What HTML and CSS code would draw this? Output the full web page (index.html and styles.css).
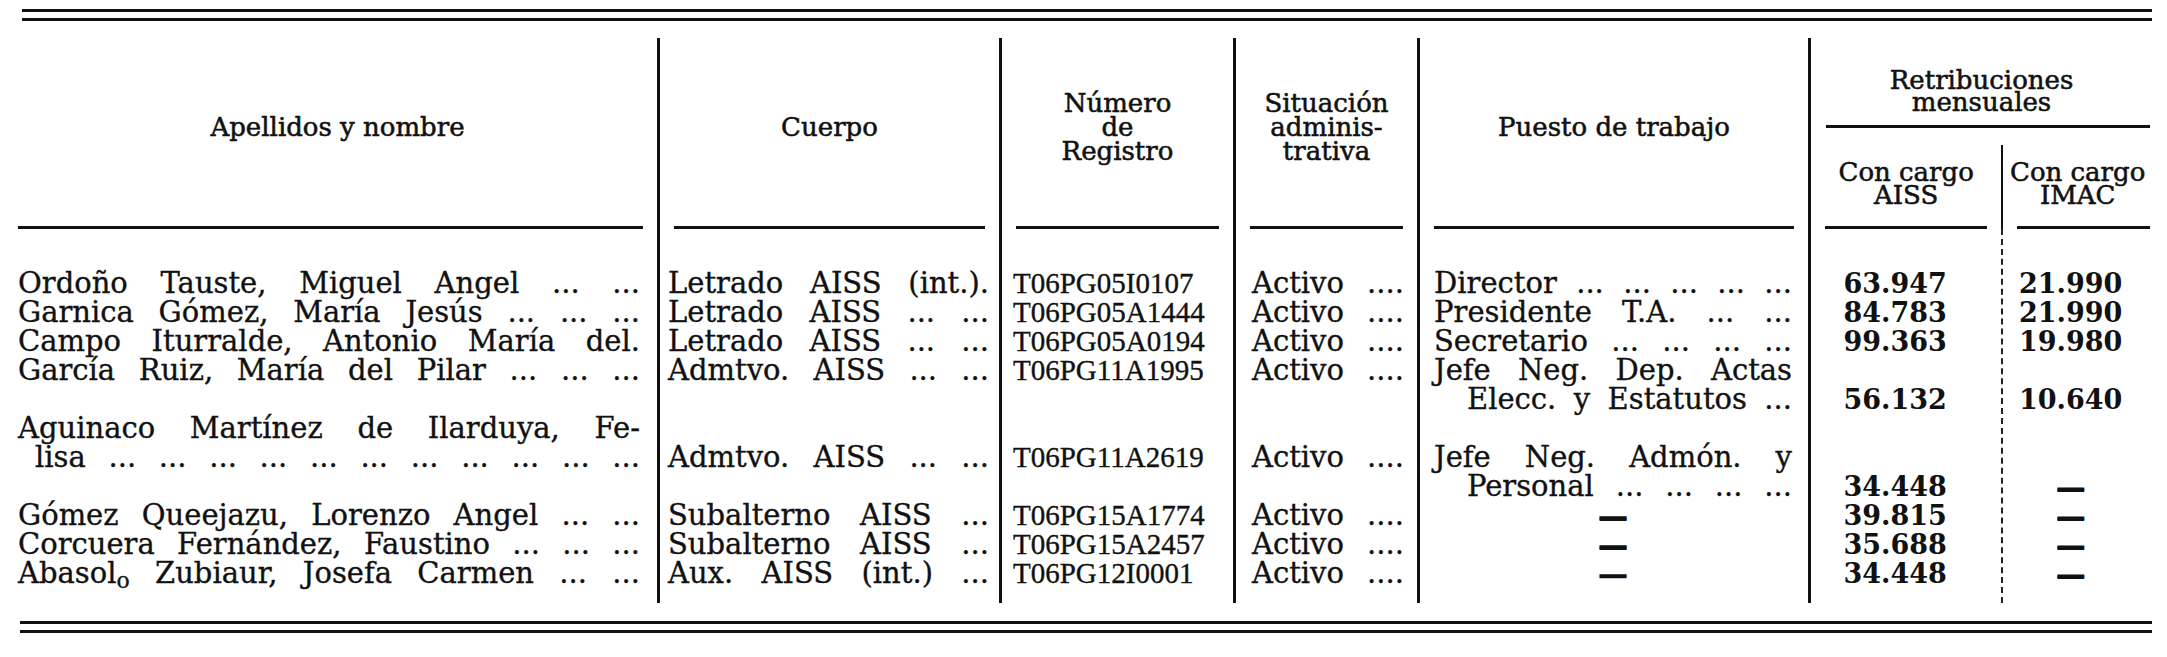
FILE: index.html
```html
<!DOCTYPE html>
<html lang="es">
<head>
<meta charset="utf-8">
<title>Relación de personal</title>
<link rel="stylesheet" href="styles.css">
</head>
<body>
<div class="page">
  <div class="double"></div>
  <div class="table">
    <div class="col c-name">
      <div class="head"><div class="head-text">Apellidos y nombre</div><div class="head-rule first"></div></div>
      <div class="body">
        <div class="ln j">Ordoño Tauste, Miguel Angel ... ...</div>
        <div class="ln j">Garnica Gómez, María Jesús ... ... ...</div>
        <div class="ln j">Campo Iturralde, Antonio María del.</div>
        <div class="ln j">García Ruiz, María del Pilar ... ... ...</div>
        <div class="ln"></div>
        <div class="ln j">Aguinaco Martínez de Ilarduya, Fe-</div>
        <div class="ln j ind-s">lisa ... ... ... ... ... ... ... ... ... ... ...</div>
        <div class="ln"></div>
        <div class="ln j">Gómez Queejazu, Lorenzo Angel ... ...</div>
        <div class="ln j">Corcuera Fernández, Faustino ... ... ...</div>
        <div class="ln j">Abasol<span class="low">o</span> Zubiaur, Josefa Carmen ... ...</div>
      </div>
    </div>
    <div class="col c-cuerpo">
      <div class="head"><div class="head-text">Cuerpo</div><div class="head-rule"></div></div>
      <div class="body">
        <div class="ln j">Letrado AISS (int.).</div>
        <div class="ln j">Letrado AISS ... ...</div>
        <div class="ln j">Letrado AISS ... ...</div>
        <div class="ln j">Admtvo. AISS ... ...</div>
        <div class="ln"></div>
        <div class="ln"></div>
        <div class="ln j">Admtvo. AISS ... ...</div>
        <div class="ln"></div>
        <div class="ln j">Subalterno AISS ...</div>
        <div class="ln j">Subalterno AISS ...</div>
        <div class="ln j">Aux. AISS (int.) ...</div>
      </div>
    </div>
    <div class="col c-num">
      <div class="head"><div class="head-text">Número<br>de<br>Registro</div><div class="head-rule"></div></div>
      <div class="body reg">
        <div class="ln">T06PG05I0107</div>
        <div class="ln">T06PG05A1444</div>
        <div class="ln">T06PG05A0194</div>
        <div class="ln">T06PG11A1995</div>
        <div class="ln"></div>
        <div class="ln"></div>
        <div class="ln">T06PG11A2619</div>
        <div class="ln"></div>
        <div class="ln">T06PG15A1774</div>
        <div class="ln">T06PG15A2457</div>
        <div class="ln">T06PG12I0001</div>
      </div>
    </div>
    <div class="col c-sit">
      <div class="head"><div class="head-text">Situación<br>adminis-<br>trativa</div><div class="head-rule"></div></div>
      <div class="body">
        <div class="ln j">Activo ....</div>
        <div class="ln j">Activo ....</div>
        <div class="ln j">Activo ....</div>
        <div class="ln j">Activo ....</div>
        <div class="ln"></div>
        <div class="ln"></div>
        <div class="ln j">Activo ....</div>
        <div class="ln"></div>
        <div class="ln j">Activo ....</div>
        <div class="ln j">Activo ....</div>
        <div class="ln j">Activo ....</div>
      </div>
    </div>
    <div class="col c-puesto">
      <div class="head"><div class="head-text">Puesto de trabajo</div><div class="head-rule"></div></div>
      <div class="body">
        <div class="ln j">Director ... ... ... ... ...</div>
        <div class="ln j">Presidente T.A. ... ...</div>
        <div class="ln j">Secretario ... ... ... ...</div>
        <div class="ln j">Jefe Neg. Dep. Actas</div>
        <div class="ln j ind-l">Elecc. y Estatutos ...</div>
        <div class="ln"></div>
        <div class="ln j">Jefe Neg. Admón. y</div>
        <div class="ln j ind-l">Personal ... ... ... ...</div>
        <div class="ln c"><span class="dash">—</span></div>
        <div class="ln c"><span class="dash">—</span></div>
        <div class="ln c"><span class="dash thin">—</span></div>
      </div>
    </div>
    <div class="col c-retrib">
      <div class="retrib-head">
        <div class="retrib-text">Retribuciones<br>mensuales</div>
        <div class="retrib-rule"></div>
      </div>
      <div class="sub">
        <div class="subcol c-aiss">
          <div class="subhead"><div class="subhead-text">Con cargo<br>AISS</div><div class="head-rule"></div></div>
          <div class="body amt">
            <div class="ln">63.947</div>
            <div class="ln">84.783</div>
            <div class="ln">99.363</div>
            <div class="ln"></div>
            <div class="ln">56.132</div>
            <div class="ln"></div>
            <div class="ln"></div>
            <div class="ln">34.448</div>
            <div class="ln">39.815</div>
            <div class="ln">35.688</div>
            <div class="ln">34.448</div>
          </div>
        </div>
        <div class="subcol c-imac">
          <div class="subhead"><div class="subhead-text">Con cargo<br>IMAC</div><div class="head-rule last"></div></div>
          <div class="body amt">
            <div class="ln">21.990</div>
            <div class="ln">21.990</div>
            <div class="ln">19.980</div>
            <div class="ln"></div>
            <div class="ln">10.640</div>
            <div class="ln"></div>
            <div class="ln"></div>
            <div class="ln"><span class="dash">—</span></div>
            <div class="ln"><span class="dash">—</span></div>
            <div class="ln"><span class="dash">—</span></div>
            <div class="ln"><span class="dash">—</span></div>
          </div>
        </div>
      </div>
    </div>
  </div>
  <div class="double bottom"></div>
</div>
</body>
</html>
```

FILE: styles.css
```css
html, body {
  margin: 0;
  padding: 0;
  background: #ffffff;
}

body {
  color: #111111;
  font-family: "DejaVu Serif", "Liberation Serif", serif;
  -webkit-text-stroke: 0.35px #111111;
}

.page {
  width: 2134px;
  padding: 9px 0 0 18px;
}

.double {
  height: 6px;
  border-top: 3px solid #111111;
  border-bottom: 3px solid #111111;
  margin-left: 4px;
}

.double.bottom {
  margin-top: 18px;
  margin-left: 2px;
}

.table {
  display: flex;
  height: 565px;
  margin-top: 17px;
}

.col {
  display: flex;
  flex-direction: column;
  box-sizing: border-box;
}

.col + .col {
  border-left: 3px solid #111111;
}

.c-name { width: 639px; }
.c-cuerpo { width: 342px; }
.c-num { width: 234px; }
.c-sit { width: 184px; }
.c-puesto { width: 391px; }
.c-retrib { width: 344px; }

.head {
  height: 191px;
  display: flex;
  flex-direction: column;
}

.head-text {
  flex: 1;
  display: flex;
  align-items: center;
  justify-content: center;
  text-align: center;
  font-size: 26px;
  line-height: 24px;
  padding-bottom: 10px;
  -webkit-text-stroke: 0.55px #111111;
}

.head-rule {
  height: 3px;
  background: #111111;
  margin: 0 14px;
}

.head-rule.first {
  margin-left: 0;
  margin-right: 14px;
}

.head-rule.last {
  margin-right: 2px;
}

.body {
  padding-top: 40px;
  font-size: 29px;
}

.ln {
  height: 29px;
  line-height: 29px;
}

.j {
  text-align: justify;
  text-align-last: justify;
}

.c {
  text-align: center;
}

.c-name .body { padding-right: 17px; }
.c-cuerpo .body { padding-left: 8px; padding-right: 10px; }
.c-num .body { padding-left: 11px; }
.c-sit .body { padding-left: 16px; padding-right: 13px; }
.c-puesto .body { padding-left: 14px; padding-right: 16px; }

.ind-s { padding-left: 17px; }
.ind-l { padding-left: 33px; }

.low {
  font-size: 22px;
  position: relative;
  top: 5px;
}

.reg {
  font-family: "Liberation Serif", "DejaVu Serif", serif;
  font-size: 29px;
}

.retrib-head {
  height: 107px;
  box-sizing: border-box;
  padding-top: 31px;
  display: flex;
  flex-direction: column;
}

.retrib-text {
  text-align: center;
  font-size: 26px;
  line-height: 22px;
  height: 44px;
  margin-bottom: 12px;
  -webkit-text-stroke: 0.55px #111111;
}

.retrib-rule {
  height: 3px;
  background: #111111;
  margin-left: 15px;
  margin-right: 2px;
}

.sub {
  flex: 1;
  display: flex;
}

.subcol {
  display: flex;
  flex-direction: column;
  box-sizing: border-box;
}

.c-aiss { width: 192px; }

.c-imac { width: 152px; }

.subhead {
  height: 84px;
  box-sizing: border-box;
  padding-top: 16px;
  display: flex;
  flex-direction: column;
}

.c-imac .subhead {
  border-left: 2px solid #111111;
}

.c-imac .body {
  flex: 1;
  border-left: 2px dashed #222222;
}

.subhead-text {
  text-align: center;
  font-size: 26px;
  line-height: 23px;
  height: 46px;
  margin-bottom: 19px;
  -webkit-text-stroke: 0.55px #111111;
}

.amt {
  font-weight: bold;
  font-size: 27px;
  text-align: center;
  -webkit-text-stroke: 0;
}

.c-aiss .amt { padding-right: 22px; }
.c-imac .amt { padding-right: 14px; }

.dash {
  font-weight: bold;
  font-size: 30px;
  text-shadow: 0 1px 0 #111111;
}

.dash.thin {
  text-shadow: none;
}
```
